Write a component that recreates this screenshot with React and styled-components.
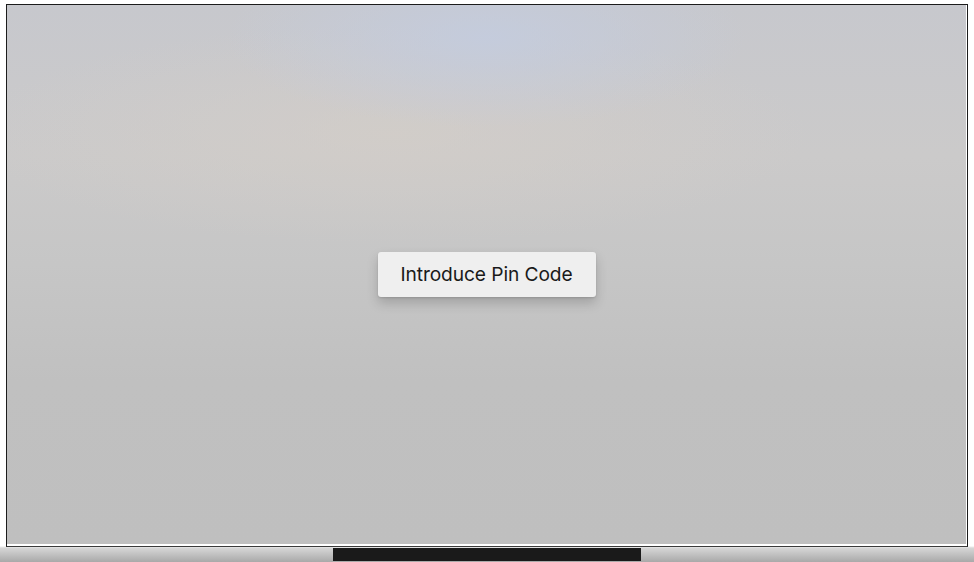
import styled, { createGlobalStyle } from "styled-components";

const Global = createGlobalStyle`
  html, body { margin: 0; padding: 0; background: #fff; }
  body { font-family: Inter, "Noto Sans", sans-serif; }
`;

const Stage = styled.div`
  width: 974px;
  height: 562px;
  position: relative;
  overflow: hidden;
  background: linear-gradient(180deg, #ffffff 0, #ffffff 546px, #d6d6d6 548px, #a9a9a9 562px);
  padding: 4px 6px 0 6px;
  box-sizing: border-box;
  display: flex;
  flex-direction: column;
  align-items: center;
`;

const Bezel = styled.div`
  width: 962px;
  height: 543px;
  box-sizing: border-box;
  border: 1px solid #1c1c1c;
  border-bottom-color: #3a3a3a;
  padding: 0 1px 2px 0;
  background: #fff;
  display: flex;
`;

const Screen = styled.div`
  flex: 1;
  display: flex;
  align-items: center;
  justify-content: center;
  background:
    radial-gradient(ellipse 260px 90px at 50% 6%, rgba(196, 204, 222, 0.9), rgba(196, 204, 222, 0) 100%),
    radial-gradient(ellipse 420px 110px at 40% 24%, rgba(212, 206, 200, 0.7), rgba(212, 206, 200, 0) 100%),
    linear-gradient(180deg, #c7c8cd 0%, #cbcaca 28%, #c6c6c6 48%, #c0c0c0 70%, #bfbfbf 100%);
`;

const PinButton = styled.button`
  margin-bottom: 1px;
  width: 218px;
  height: 45px;
  padding: 0;
  border: none;
  border-radius: 3px;
  background: #efefef;
  color: #1a1a1a;
  font-family: Inter, "Noto Sans", sans-serif;
  font-size: 19.2px;
  font-weight: 400;
  letter-spacing: -0.1px;
  box-shadow: 0 6px 12px rgba(0, 0, 0, 0.18), 0 1px 2px rgba(0, 0, 0, 0.12);
  cursor: pointer;
`;

const Stand = styled.div`
  margin-top: 1px;
  width: 308px;
  height: 13px;
  background: #1a1a1a;
`;

export default function App() {
  return (
    <>
      <Global />
      <Stage>
        <Bezel>
          <Screen>
            <PinButton>Introduce Pin Code</PinButton>
          </Screen>
        </Bezel>
        <Stand />
      </Stage>
    </>
  );
}
